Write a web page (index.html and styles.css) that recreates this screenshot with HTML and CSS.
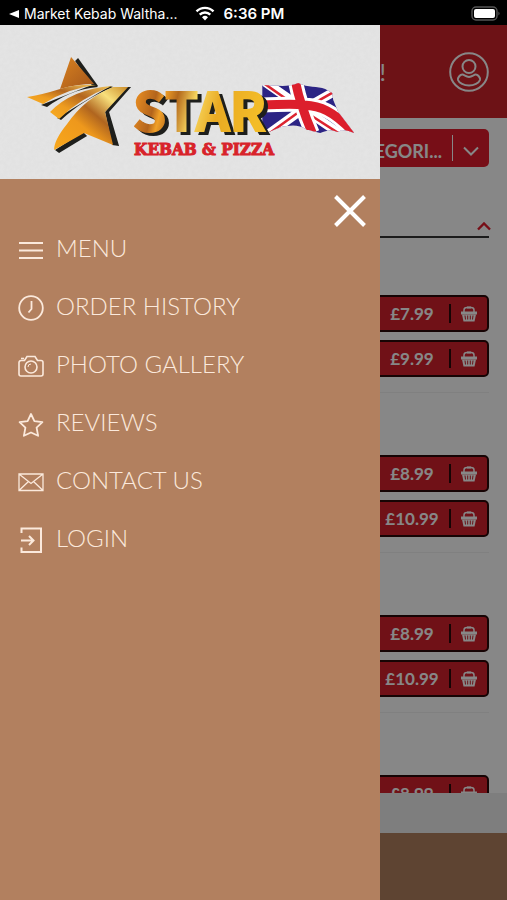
FILE: index.html
```html
<!DOCTYPE html>
<html lang="en">
<head>
    <meta charset="UTF-8">
    <meta name="viewport" content="width=device-width, initial-scale=1.0">
    <title>Star Kebab &amp; Pizza</title>
    <link rel="stylesheet" href="styles.css">
</head>
<body>

<div class="status-bar">
    <svg class="back-icon" viewBox="0 0 10 10"><path d="M10 1v8L0 5z" fill="#fff"/></svg>
    <span class="back-app">Market Kebab Waltha...</span>
    <svg class="wifi-icon" viewBox="0 0 20 15" fill="none" stroke="#fff" stroke-width="2.4">
        <path d="M1.5 5.4a12 12 0 0 1 17 0"/>
        <path d="M4.7 8.7a7.5 7.5 0 0 1 10.6 0"/>
        <path d="M10 14.5l-3-3.2a4.3 4.3 0 0 1 6 0z" fill="#fff" stroke="none"/>
    </svg>
    <span class="time">6:36 PM</span>
    <svg class="battery-icon" viewBox="0 0 30 16">
        <rect x="1" y="1" width="25" height="13" rx="4" fill="none" stroke="#555" stroke-width="1.4"/>
        <rect x="3" y="3" width="21" height="9" rx="2" fill="#fff"/>
        <path d="M27.5 5.5q2 2 0 4z" fill="#666"/>
    </svg>
</div>

<div class="app">
    <main class="page">
        <header class="page-header">
            <span class="welcome">!</span>
            <button type="button" class="account" aria-label="Account">
                <svg viewBox="0 0 40 40" fill="none" stroke="currentColor" stroke-width="2">
                    <circle cx="20" cy="20" r="18.8"/>
                    <circle cx="20" cy="14.5" r="6.5"/>
                    <path d="M13 22.5c-2 .5-4.5 3-4 5.5 1 3 6 5.5 11 5.5s10-2.5 11-5.5c.5-2.5-2-5-4-5.5-1-.3-2 .5-3 1.2-2.5 1.5-5.5 1.5-8 0-1-.7-2-1.5-3-1.2z"/>
                </svg>
            </button>
        </header>

        <div class="content">
            <div class="category-select">
                <select aria-label="Categories">
                    <option>CATEGORI...</option>
                </select>
                <svg viewBox="0 0 16 10" fill="none" stroke="currentColor" stroke-width="2"><path d="M1 1.5l7 7 7-7"/></svg>
            </div>

            <div class="section-title">
                <svg viewBox="0 0 14 9" fill="none" stroke="currentColor" stroke-width="2.4"><path d="M1 7.5l6-6 6 6"/></svg>
            </div>

            <div class="item">
                <button type="button" class="price"><span>£7.99</span><svg><use href="#basket"/></svg></button>
                <button type="button" class="price"><span>£9.99</span><svg><use href="#basket"/></svg></button>
            </div>
            <div class="item">
                <button type="button" class="price"><span>£8.99</span><svg><use href="#basket"/></svg></button>
                <button type="button" class="price"><span>£10.99</span><svg><use href="#basket"/></svg></button>
            </div>
            <div class="item">
                <button type="button" class="price"><span>£8.99</span><svg><use href="#basket"/></svg></button>
                <button type="button" class="price"><span>£10.99</span><svg><use href="#basket"/></svg></button>
            </div>
            <div class="item">
                <button type="button" class="price"><span>£8.99</span><svg><use href="#basket"/></svg></button>
            </div>
        </div>

        <div class="order-bar"></div>
        <footer class="page-footer"></footer>
    </main>

    <div class="backdrop"></div>

    <aside class="drawer">
        <div class="brand">
            <svg viewBox="0 0 380 154" role="img" aria-label="Star Kebab and Pizza">
                <defs>
                    <linearGradient id="gold" x1="0" x2="1" y1="0" y2=".15">
                        <stop offset="0" stop-color="#f09a1c"/>
                        <stop offset=".1" stop-color="#dd8420"/>
                        <stop offset=".22" stop-color="#b3641c"/>
                        <stop offset=".28" stop-color="#f0a028"/>
                        <stop offset=".38" stop-color="#b3681c"/>
                        <stop offset=".52" stop-color="#f8d860"/>
                        <stop offset=".7" stop-color="#e9aa22"/>
                        <stop offset="1" stop-color="#f3bc28"/>
                    </linearGradient>
                    <linearGradient id="starTop" x1="0" x2="1" y1="0" y2="1">
                        <stop offset="0" stop-color="#d9821f"/>
                        <stop offset="1" stop-color="#a3561c"/>
                    </linearGradient>
                    <linearGradient id="swoosh" x1="0" x2="1" y1="1" y2="0">
                        <stop offset="0" stop-color="#f8ac20"/>
                        <stop offset=".3" stop-color="#ee9c20"/>
                        <stop offset=".6" stop-color="#b3661f"/>
                        <stop offset="1" stop-color="#f3c85a"/>
                    </linearGradient>
                    <linearGradient id="starBody" x1="0" x2="1" y1="1" y2="0">
                        <stop offset="0" stop-color="#f8a81c"/>
                        <stop offset=".38" stop-color="#ee981c"/>
                        <stop offset=".56" stop-color="#b0651f"/>
                        <stop offset=".78" stop-color="#f8e07c"/>
                        <stop offset="1" stop-color="#c98a28"/>
                    </linearGradient>
                    <filter id="paper">
                        <feTurbulence type="fractalNoise" baseFrequency=".25" numOctaves="2"/>
                        <feColorMatrix values="0 0 0 0 .5  0 0 0 0 .5  0 0 0 0 .5  .4 0 0 0 -.1"/>
                    </filter>
                    <clipPath id="flagShape">
                        <path d="M262 60c14 0 24 3 36-2 10 5 19 3 27 6l7 4 1 7 5 12 16 21c-7-3-12-4-17-1-7-3-11-1-17 1-6-1-9-3-13-3-7-5-14-5-20-4-7 0-13 5-25 8z"/>
                    </clipPath>
                </defs>

                <rect width="380" height="154" filter="url(#paper)" opacity=".3"/>

                <!-- star -->
                <g fill="#1e1f1c">
                    <path d="M75 36l3-3 20 28-5 1z"/>
                    <path d="M41 80l6 2c14-10 29-18 51-20l-4-3z"/>
                    <path d="M57 93l4 2c15-14 31-24 52-33l-3-1z"/>
                    <path d="M124 62h7l-22 25 10 34-7-1-7-33z"/>
                    <path d="M55 125l4 3 28-17-4-4z"/>
                </g>
                <path d="M71 32l23 27q-17 0-34 5z" fill="url(#starTop)"/>
                <path d="M27 72q14-2 33-8 17-5 36-4-28 3-53 19z" fill="url(#swoosh)"/>
                <path d="M50 87q22-23 62-26-32 12-53 33z" fill="url(#swoosh)"/>
                <path d="M54 125q0-10 13-26 18-26 46-37h15l-23 25 8 33-29-12z" fill="url(#starBody)"/>

                <!-- flag -->
                <g clip-path="url(#flagShape)" fill="none">
                    <path d="M256 50h104v64H256z" fill="#2c2484"/>
                    <path d="M262 55l34 24 50 34M264 112l36-26 35-20" stroke="#fff" stroke-width="9"/>
                    <path d="M262 57l34 24 50 32M264 112l36-26 35-20" stroke="#dc2430" stroke-width="2.5"/>
                    <path d="M256 80c22 0 34-2 48 0 15 1 28 4 52 30M295 55c3 17 9 34 17 53" stroke="#fff" stroke-width="15"/>
                    <path d="M256 80c22 0 34-2 48 0 15 1 28 4 52 30M295 55c3 17 9 34 17 53" stroke="#dc1f2c" stroke-width="9"/>
                </g>

                <text class="brand-name" x="133" y="106" fill="url(#gold)" stroke="url(#gold)">STAR</text>
                <text class="brand-sub" x="134" y="130">KEBAB &amp; PIZZA</text>
            </svg>
        </div>

        <button type="button" class="close" aria-label="Close menu">
            <svg viewBox="0 0 32 32" fill="none" stroke="currentColor" stroke-width="4"><path d="M1.5 1.5l29 29M30.5 1.5l-29 29"/></svg>
        </button>

        <nav class="menu">
            <a href="#">
                <svg viewBox="0 0 26 26" stroke-width="2"><path d="M1 6h24M1 13.500h24M1 21h24"/></svg>
                MENU
            </a>
            <a href="#">
                <svg viewBox="0 0 26 26" stroke-width="1.8"><circle cx="13" cy="13" r="11.8"/><path d="M13.5 6v8l-3 3.5"/></svg>
                ORDER HISTORY
            </a>
            <a href="#">
                <svg viewBox="0 0 26 26" stroke-width="1.6">
                    <path d="M3 7.5h3.5l2.5-4h8l2.5 4H23a2 2 0 0 1 2 2V21a2 2 0 0 1-2 2H3a2 2 0 0 1-2-2V9.5a2 2 0 0 1 2-2z"/>
                    <circle cx="13" cy="14" r="6"/>
                    <path d="M10 14a3 3 0 0 1 3-3" stroke-width="1"/>
                    <path d="M3 5.5h3"/>
                </svg>
                PHOTO GALLERY
            </a>
            <a href="#">
                <svg viewBox="0 0 26 26" stroke-width="1.8" stroke-linejoin="round"><path d="M13 3l3.4 7.2 8 1-5.8 5.400 1.5 8.200-7.100-3.300-7.100 3.300 1.500-8.200L1.600 11.200l8-1z"/></svg>
                REVIEWS
            </a>
            <a href="#">
                <svg viewBox="0 0 26 26" stroke-width="1.3"><path d="M1 5h24v16.5H1zM1 5l12 9.500L25 5M1 21.500l9.500-9M25 21.500l-9.500-9"/></svg>
                CONTACT US
            </a>
            <a href="#">
                <svg viewBox="0 0 26 26" stroke-width="2"><path d="M3.500 6V1.500H23V25H3.500v-4.500M3 13.500h12M11 9l4.500 4.500L11 18"/></svg>
                LOGIN
            </a>
        </nav>
    </aside>
</div>

<svg class="sprite">
    <symbol id="basket" viewBox="0 0 18 16">
        <path d="M4 6.5V4q0-2.5 3-2.5h4q3 0 3 2.5v2.5" fill="none" stroke="currentColor" stroke-width="1.5"/>
        <path d="M7 .5h4v2H7zM1 5.5h16v3H1z" fill="currentColor"/>
        <path d="M2 8.5h14l-1.5 7h-11z" fill="currentColor"/>
        <path d="M5 9.5l.5 4M7.700 9.500v4M10.300 9.500v4M13 9.500l-.5 4" stroke="#c9202c" stroke-width="1"/>
    </symbol>
</svg>

</body>
</html>
```

FILE: styles.css
```css
* {
    box-sizing: border-box;
}

body {
    margin: 0;
    height: 100vh;
    display: flex;
    flex-direction: column;
    overflow: hidden;
    font-family: Lato, sans-serif;
    color: #fff;
}

button {
    padding: 0;
    border: none;
    background: none;
    color: inherit;
    font-family: inherit;
    cursor: pointer;
}

svg {
    display: block;
}

.sprite {
    position: absolute;
    width: 0;
    height: 0;
}

/* phone status bar */
.status-bar {
    flex: none;
    display: flex;
    align-items: center;
    height: 25px;
    padding: 2px 6px 0 9px;
    background-color: #000;
    font-family: Inter, sans-serif;
    font-size: 14px;
}

.back-icon {
    width: 10px;
    height: 10px;
    margin-right: 5px;
}

.wifi-icon {
    width: 20px;
    height: 15px;
    margin: 0 9px 0 17px;
}

.time {
    font-weight: 600;
    font-size: 15px;
}

.battery-icon {
    width: 30px;
    height: 16px;
    margin-left: auto;
}

.app {
    flex: 1;
    min-height: 0;
    position: relative;
}

/* page behind the drawer */
.page {
    height: 100%;
    display: flex;
    flex-direction: column;
    background-color: #fff;
}

.page-header {
    flex: none;
    display: flex;
    align-items: center;
    justify-content: flex-end;
    gap: 63px;
    height: 93px;
    padding: 0 18px;
    background-color: #ce222a;
}

.welcome {
    font-size: 24px;
}

.account svg {
    width: 40px;
    height: 40px;
}

.content {
    flex: 1;
    min-height: 0;
    overflow: hidden;
    padding: 11px 18px 0;
}

.category-select {
    display: flex;
    align-items: center;
    height: 38px;
    border-radius: 5px;
    background-color: #e01c2c;
}

.category-select select {
    flex: 1;
    height: 26px;
    padding: 5px 10px 0 0;
    border: none;
    border-right: 1px solid #fff;
    background: none;
    appearance: none;
    color: #fff;
    font-family: Lato, sans-serif;
    font-size: 18px;
    font-weight: bold;
    text-align-last: right;
}

.category-select svg {
    width: 16px;
    height: 10px;
    margin: 5px 10px 0;
}

.section-title {
    display: flex;
    justify-content: flex-end;
    align-items: flex-end;
    height: 71px;
    padding-bottom: 5px;
    border-bottom: 2px solid #333;
    color: #e01c2c;
}

.section-title svg {
    width: 14px;
    height: 9px;
    margin-right: -2px;
}

.item {
    display: flex;
    flex-direction: column;
    align-items: flex-end;
    gap: 8px;
    padding: 57px 0 15px;
    margin-bottom: 5px;
    border-bottom: 1px solid #f2f2f2;
}

.price {
    display: flex;
    align-items: center;
    width: 116px;
    height: 37px;
    border: 2px solid #2a0808;
    border-radius: 5px;
    background-color: #d3202d;
    font-size: 17px;
    font-weight: bold;
}

.price span {
    flex: 1;
    line-height: 19px;
    border-right: 2px solid #2a0808;
}

.price svg {
    width: 18px;
    height: 18px;
    margin: 0 9px;
}

.order-bar {
    flex: none;
    height: 40px;
    background-color: #eee;
}

.page-footer {
    flex: none;
    height: 67px;
    background-color: #b2805f;
}

.backdrop {
    position: absolute;
    inset: 0;
    background-color: rgba(0, 0, 0, 0.47);
}

/* side drawer */
.drawer {
    position: absolute;
    top: 0;
    bottom: 0;
    left: 0;
    width: 75%;
    display: flex;
    flex-direction: column;
    background-color: #b2805f;
}

.brand {
    background-color: #e4e4e4;
}

.brand svg {
    width: 100%;
}

.brand-name {
    font-family: "Noto Sans CJK SC", sans-serif;
    font-size: 53px;
    font-weight: bold;
    stroke-width: 2px;
    filter: drop-shadow(4px 3px 0 #1e1f1c);
}

.brand-sub {
    font-family: "DejaVu Serif Condensed", "DejaVu Serif", serif;
    font-size: 17px;
    font-weight: bold;
    fill: #d8232a;
    stroke: #d8232a;
    stroke-width: 1px;
}

.close {
    align-self: flex-end;
    margin: 16px 14px 0 0;
}

.close svg {
    width: 32px;
    height: 32px;
}

.menu {
    display: flex;
    flex-direction: column;
    gap: 18px;
    padding: 0 18px;
}

.menu a {
    display: flex;
    align-items: center;
    gap: 12px;
    height: 40px;
    color: #fbe9dc;
    font-size: 24px;
    font-weight: 300;
    text-decoration: none;
}

.menu svg {
    width: 26px;
    height: 26px;
    margin-top: 5px;
    fill: none;
    stroke: #fbe9dc;
}
```
